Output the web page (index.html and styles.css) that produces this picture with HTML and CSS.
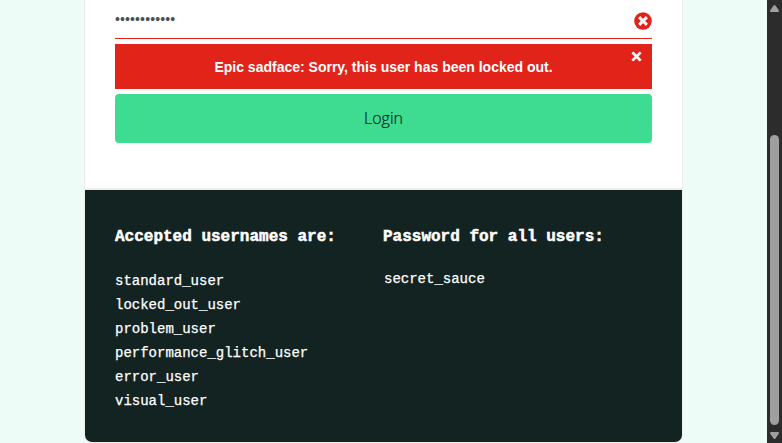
FILE: index.html
```html
<!DOCTYPE html>
<html lang="en">
<head>
<meta charset="utf-8">
<title>Swag Labs</title>
<link rel="stylesheet" href="styles.css">
</head>
<body>
<main class="page">
  <div class="card">
    <form class="login">
      <div class="field">
        <span class="dots">••••••••••••</span>
        <svg class="error-icon" width="18" height="18" viewBox="0 0 18 18"><circle cx="9" cy="9" r="8.8" fill="#e2231a"/><path d="M6.2 6.2l5.6 5.6M11.8 6.2l-5.6 5.6" stroke="#fff" stroke-width="3" stroke-linecap="square"/></svg>
      </div>
      <div class="message">
        <h3 class="message-text">Epic sadface: Sorry, this user has been locked out.</h3>
        <svg class="close" width="11" height="11" viewBox="0 0 11 11"><path d="M2.3 2.3l6.4 6.4M8.7 2.3l-6.4 6.4" stroke="#fff" stroke-width="2.7" stroke-linecap="square"/></svg>
      </div>
      <button class="submit" type="button"><span class="submit-label">Login</span></button>
    </form>
    <section class="credentials">
      <div class="users">
        <h4 class="heading">Accepted usernames are:</h4>
        <ul class="list">
          <li>standard_user</li>
          <li>locked_out_user</li>
          <li>problem_user</li>
          <li>performance_glitch_user</li>
          <li>error_user</li>
          <li>visual_user</li>
        </ul>
      </div>
      <div class="password">
        <h4 class="heading">Password for all users:</h4>
        <p class="secret">secret_sauce</p>
      </div>
    </section>
  </div>
</main>
<aside class="scrollbar">
  <svg width="9" height="7" viewBox="0 0 9 7"><path d="M3.6.6Q4.5-.5 5.4.6L8.8 5.3Q9.3 7 8 7H1Q-.3 7 .2 5.3Z" fill="#9f9f9f"/></svg>
  <div class="thumb"></div>
  <svg class="down" width="9" height="7" viewBox="0 0 9 7"><path d="M3.6 6.4Q4.5 7.5 5.4 6.4L8.8 1.7Q9.3 0 8 0H1Q-.3 0 .2 1.7Z" fill="#9f9f9f"/></svg>
</aside>
</body>
</html>
```
FILE: styles.css
```css
* { box-sizing: border-box; }
body {
  margin: 0;
  height: 443px;
  display: flex;
  overflow: hidden;
  background: #edfcf6;
  font-family: "Liberation Sans", Arial, sans-serif;
}
.page { flex: 1; padding-left: 84px; }
.card {
  width: 599px;
  height: 443px;
  border: solid #ededed;
  border-width: 0 1px 1px;
  border-radius: 0 0 8px 8px;
  background: #fff;
  overflow: hidden;
}
.login {
  height: 190px;
  padding: 0 30px;
  border-bottom: 2px solid #ededed;
}
.field {
  height: 39px;
  margin-bottom: 5px;
  padding-top: 12px;
  display: flex;
  justify-content: space-between;
  border-bottom: 1px solid #e2231a;
}
.dots {
  color: #485058;
  font-size: 14px;
  line-height: 14px;
  letter-spacing: .12px;
}
.message {
  position: relative;
  height: 45px;
  margin-bottom: 5px;
  background: #e2231a;
  color: #fff;
  text-align: center;
}
.message-text {
  margin: 0;
  font-size: 14px;
  line-height: 46px;
}
.close { position: absolute; top: 7px; right: 10px; }
.submit {
  display: block;
  width: 100%;
  height: 49px;
  padding: 0;
  border: 0;
  border-radius: 4px;
  background: #3ddc91;
  color: #132322;
  font: 300 16px/49px "Open Sans", sans-serif;
  -webkit-text-stroke: .2px #132322;
}
.credentials {
  height: 252px;
  padding: 37px 30px 0;
  display: flex;
  background: #132322;
  color: #fff;
  font-family: "Liberation Mono", monospace;
}
.users { width: 268px; }
.heading {
  margin: 0;
  font-size: 16px;
  line-height: 20px;
  -webkit-text-stroke: .5px #fff;
}
.list {
  margin: 22px 0 0;
  padding: 0;
  list-style: none;
  font-size: 14px;
  line-height: 24px;
  -webkit-text-stroke: .25px #fff;
}
.secret {
  margin: 20px 0 0 1px;
  font-size: 14px;
  line-height: 24px;
  -webkit-text-stroke: .25px #fff;
}
.scrollbar {
  width: 15px;
  padding: 5px 0 4px;
  display: flex;
  flex-direction: column;
  align-items: center;
  background: #2c2c2c;
}
.thumb {
  width: 9px;
  height: 290px;
  margin-top: 123px;
  border-radius: 5px;
  background: #9f9f9f;
}
.down { margin-top: 7px; }
```
